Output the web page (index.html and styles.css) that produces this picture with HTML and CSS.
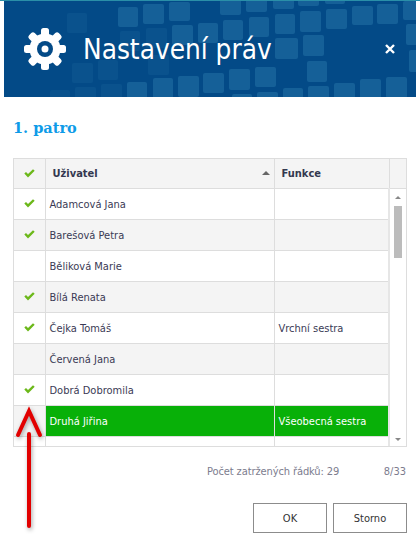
FILE: index.html
```html
<!DOCTYPE html>
<html lang="cs">
<head>
    <meta charset="UTF-8">
    <title>Nastavení práv</title>
    <link rel="stylesheet" href="styles.css">
</head>
<body>
    <svg width="0" height="0" class="defs">
        <symbol id="check" viewBox="0 0 11 9">
            <path d="M0.3 4.6 L2 3 L4 4.9 L9 0.3 L10.7 1.8 L4 8.6 Z"/>
        </symbol>
    </svg>

    <div class="strip"></div>
    <header class="top">
        <svg class="tiles" width="412" height="96" viewBox="4 1 412 96">
            <g fill="#2f7fb0" opacity="0.42">
                <rect x="118" y="7" width="20" height="20" rx="2"/>
                <rect x="143" y="4" width="21" height="20" rx="2"/>
                <rect x="169" y="2" width="21" height="19" rx="2"/>
                <rect x="220" y="-4" width="21" height="19" rx="2"/>
                <rect x="246" y="-7" width="21" height="19" rx="2"/>
                <rect x="273" y="-10" width="21" height="19" rx="2"/>
                <rect x="298" y="-12" width="21" height="18" rx="2"/>
                <rect x="325" y="-14" width="20" height="18" rx="2"/>
                <rect x="403" y="1" width="20" height="19" rx="2"/>
                <rect x="377" y="4" width="21" height="20" rx="2"/>
                <rect x="352" y="6" width="21" height="19" rx="2"/>
                <rect x="326" y="9" width="21" height="20" rx="2"/>
                <rect x="300" y="11" width="21" height="21" rx="2"/>
                <rect x="275" y="14" width="20" height="20" rx="2"/>
                <rect x="249" y="17" width="20" height="20" rx="2"/>
                <rect x="223" y="20" width="20" height="20" rx="2"/>
                <rect x="198" y="23" width="20" height="20" rx="2"/>
                <rect x="172" y="25" width="21" height="20" rx="2"/>
                <rect x="275" y="38" width="23" height="21" rx="2"/>
                <rect x="303" y="35" width="21" height="21" rx="2"/>
                <rect x="406" y="24" width="20" height="21" rx="2"/>
                <rect x="307" y="61" width="20" height="21" rx="2"/>
                <rect x="255" y="67" width="21" height="20" rx="2"/>
                <rect x="229" y="69" width="21" height="21" rx="2"/>
                <rect x="203" y="73" width="21" height="20" rx="2"/>
                <rect x="178" y="76" width="21" height="21" rx="2"/>
                <rect x="153" y="78" width="20" height="21" rx="2"/>
                <rect x="127" y="82" width="20" height="21" rx="2"/>
                <rect x="386" y="77" width="21" height="21" rx="2"/>
                <rect x="360" y="79" width="21" height="21" rx="2"/>
                <rect x="334" y="83" width="21" height="21" rx="2"/>
                <rect x="308" y="86" width="21" height="21" rx="2"/>
                <rect x="283" y="88" width="20" height="21" rx="2"/>
                <rect x="257" y="92" width="21" height="21" rx="2"/>
                <rect x="232" y="94" width="20" height="21" rx="2"/>
                <rect x="409" y="50" width="20" height="22" rx="2"/>
            </g>
            <g fill="#2f7fb0" opacity="0.16">
                <rect x="67" y="13" width="20" height="20" rx="2"/>
                <rect x="146" y="28" width="21" height="20" rx="2"/>
                <rect x="120" y="31" width="20" height="20" rx="2"/>
                <rect x="72" y="63" width="21" height="20" rx="2"/>
                <rect x="98" y="60" width="20" height="20" rx="2"/>
                <rect x="148" y="55" width="21" height="20" rx="2"/>
                <rect x="101" y="84" width="21" height="21" rx="2"/>
                <rect x="75" y="87" width="21" height="21" rx="2"/>
                <rect x="50" y="90" width="20" height="21" rx="2"/>
            </g>
        </svg>
        <svg class="gear" width="44" height="44" viewBox="0 0 44 44">
            <g fill="#fff">
                <circle cx="22" cy="22" r="15.5"/>
                <rect x="18" y="1" width="8" height="42" rx="2.5"/>
                <rect x="18" y="1" width="8" height="42" rx="2.5" transform="rotate(45 22 22)"/>
                <rect x="18" y="1" width="8" height="42" rx="2.5" transform="rotate(90 22 22)"/>
                <rect x="18" y="1" width="8" height="42" rx="2.5" transform="rotate(135 22 22)"/>
            </g>
            <circle cx="22" cy="22" r="8" fill="#034a87"/>
            <circle cx="22" cy="22" r="3.5" fill="#fff"/>
        </svg>
        <h1>Nastavení práv</h1>
        <svg class="close" width="10" height="10" viewBox="0 0 10 10">
            <path d="M1 1 L9 9 M9 1 L1 9" stroke="#fff" stroke-width="2.4"/>
        </svg>
    </header>

    <h2>1. patro</h2>

    <div class="grid">
        <table>
            <colgroup>
                <col class="c-check">
                <col class="c-user">
                <col class="c-func">
                <col class="c-scroll">
            </colgroup>
            <thead>
                <tr>
                    <th class="check"><svg class="ok"><use href="#check"/></svg></th>
                    <th class="user">Uživatel<span class="sort"></span></th>
                    <th class="func">Funkce</th>
                    <th></th>
                </tr>
            </thead>
            <tbody>
                <tr>
                    <td class="check"><svg class="ok"><use href="#check"/></svg></td>
                    <td>Adamcová Jana</td>
                    <td></td>
                    <td class="scroll" rowspan="9">
                        <div class="scrollbar">
                            <span class="arrow up"></span>
                            <div class="track"><div class="thumb"></div></div>
                            <span class="arrow down"></span>
                        </div>
                    </td>
                </tr>
                <tr class="alt">
                    <td class="check"><svg class="ok"><use href="#check"/></svg></td>
                    <td>Barešová Petra</td>
                    <td></td>
                </tr>
                <tr>
                    <td class="check"></td>
                    <td>Běliková Marie</td>
                    <td></td>
                </tr>
                <tr class="alt">
                    <td class="check"><svg class="ok"><use href="#check"/></svg></td>
                    <td>Bílá Renata</td>
                    <td></td>
                </tr>
                <tr>
                    <td class="check"><svg class="ok"><use href="#check"/></svg></td>
                    <td>Čejka Tomáš</td>
                    <td>Vrchní sestra</td>
                </tr>
                <tr class="alt">
                    <td class="check"></td>
                    <td>Červená Jana</td>
                    <td></td>
                </tr>
                <tr>
                    <td class="check"><svg class="ok"><use href="#check"/></svg></td>
                    <td>Dobrá Dobromila</td>
                    <td></td>
                </tr>
                <tr class="alt selected">
                    <td class="check"></td>
                    <td>Druhá Jiřina</td>
                    <td>Všeobecná sestra</td>
                </tr>
                <tr class="stub">
                    <td class="check"></td>
                    <td></td>
                    <td></td>
                </tr>
            </tbody>
        </table>
    </div>

    <div class="status">
        <span class="count">Počet zatržených řádků: 29</span>
        <span class="pos">8/33</span>
    </div>

    <div class="buttons">
        <button type="button">OK</button>
        <button type="button">Storno</button>
    </div>

    <!-- red annotation arrow over the grid -->
    <svg class="pointer" width="40" height="126" viewBox="0 0 40 126">
        <g fill="none" stroke="#e20000" stroke-linecap="round">
            <path d="M18 32 L18 124" stroke-width="4"/>
            <path d="M7 33 L18 9 L29 33" stroke-width="4"/>
        </g>
    </svg>
</body>
</html>
```

FILE: styles.css
```css
* {
    box-sizing: border-box;
}
body {
    margin: 0;
    background: #fff;
    font-family: "DejaVu Sans", sans-serif;
    font-stretch: condensed;
    font-size: 11px;
    color: #3a3a55;
}
.defs {
    display: block;
    height: 0;
}
.strip {
    height: 1px;
    background: #2a8fa8;
}
.top {
    position: relative;
    display: flex;
    align-items: center;
    height: 96px;
    margin: 0 4px;
    padding-left: 19px;
    background: #034a87;
    overflow: hidden;
}
.tiles {
    position: absolute;
    left: 0;
    top: 0;
}
.gear, .close, h1 {
    position: relative;
}
.gear {
    flex: none;
}
h1 {
    margin: 0 0 0 16px;
    font-size: 27.7px;
    font-weight: 400;
    color: #fff;
}
.close {
    margin-left: auto;
    margin-right: 21px;
}
h2 {
    margin: 20px 0 19px 13px;
    font-family: "DejaVu Serif", serif;
    font-stretch: normal;
    font-size: 14.5px;
    line-height: 22px;
    font-weight: 700;
    color: #0e9be8;
}
.grid {
    height: 289px;
    margin: 0 13px;
    border: 1px solid #ddd;
    overflow: hidden;
}
table {
    width: 100%;
    table-layout: fixed;
    border-collapse: collapse;
}
.c-check {
    width: 31px;
}
.c-func {
    width: 115px;
}
.c-scroll {
    width: 17px;
}
th, td {
    height: 31px;
    padding: 1px 4px 0;
    border: 1px solid #ddd;
    border-top: 0;
    text-align: left;
    font-weight: 400;
    white-space: nowrap;
}
tr > :first-child {
    border-left: 0;
}
tr > :last-child {
    border-right: 0;
}
thead th {
    height: 29px;
    padding-top: 0;
    background: #f4f4f4;
    font-weight: 700;
    color: #33384f;
}
th.user {
    position: relative;
    padding-left: 7px;
}
th.func {
    padding-left: 7px;
}
.sort {
    position: absolute;
    right: 4px;
    top: 12px;
    border-left: 4px solid transparent;
    border-right: 4px solid transparent;
    border-bottom: 4px solid #666;
}
.check {
    padding: 0;
    text-align: center;
}
.ok {
    display: block;
    width: 11px;
    height: 9px;
    margin: 0 auto;
    fill: #6cb81a;
}
.alt td {
    background: #f4f4f4;
}
.selected td:not(.check) {
    background: #08b008;
    color: #fff;
}
.stub td {
    height: 11px;
    border-bottom: 0;
}
td.scroll {
    padding: 0;
    border-left: 2px solid #e6e6e6;
    border-bottom: 0;
    vertical-align: top;
    background: #fff;
}
.scrollbar {
    display: flex;
    flex-direction: column;
    align-items: center;
    height: 259px;
    padding-top: 7px;
}
.track {
    flex: 1;
    width: 8px;
}
.thumb {
    width: 8px;
    height: 52px;
    margin-top: 7px;
    background: #bcbcbc;
}
.arrow {
    border-left: 3px solid transparent;
    border-right: 3px solid transparent;
}
.arrow.up {
    border-bottom: 3px solid #888;
}
.arrow.down {
    border-top: 3px solid #888;
    margin-bottom: 7px;
}
.status {
    display: flex;
    justify-content: space-between;
    margin: 17px 14px 0 207px;
    line-height: 15px;
    color: #7c7c8e;
}
.count {
    letter-spacing: -0.1px;
}
.buttons {
    display: flex;
    justify-content: flex-end;
    gap: 6px;
    margin: 24px 13px 0 0;
}
button {
    width: 74px;
    height: 30px;
    padding: 0;
    border: 1px solid #8c8c8c;
    background: #fff;
    font-family: inherit;
    font-stretch: condensed;
    font-size: 11px;
    color: #333;
}
.pointer {
    position: absolute;
    left: 11px;
    top: 402px;
    filter: drop-shadow(1px 2px 2px rgba(0, 0, 0, 0.35));
}
```
